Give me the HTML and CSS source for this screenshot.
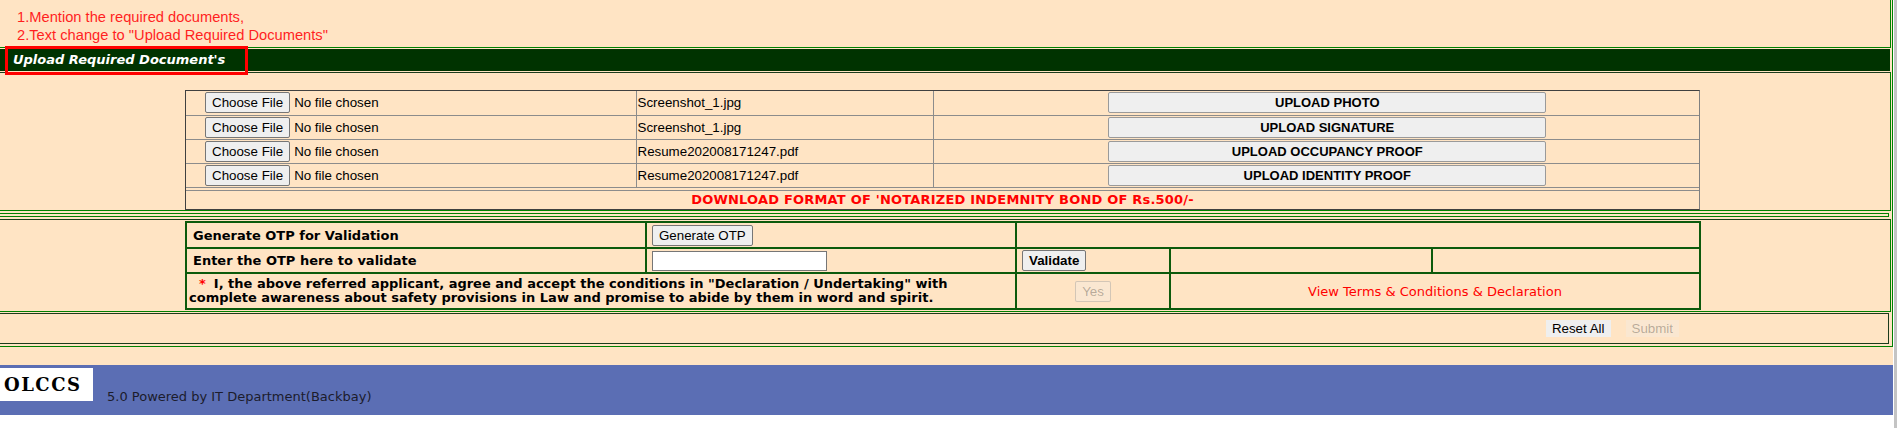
FILE: index.html
```html
<!DOCTYPE html>
<html lang="en">
<head>
<meta charset="utf-8">
<title>Upload Required Documents</title>
<link rel="stylesheet" href="styles.css">
</head>
<body>
<div class="page">
  <div class="sheet">
    <div class="frame">
      <div class="note">
        <p>1.Mention the required documents,</p>
        <p>2.Text change to "Upload Required Documents"</p>
      </div>
      <div class="band">
        <span class="band-title">Upload Required Document's</span>
        <span class="annot"></span>
      </div>
      <div class="upload">
        <div class="files-wrap">
          <table class="files">
            <colgroup><col class="fc1"><col class="fc2"><col class="fc3"></colgroup>
            <tr>
              <td class="pick"><input type="file" class="file"></td>
              <td class="fname">Screenshot_1.jpg</td>
              <td class="act"><button class="up-btn">UPLOAD PHOTO</button></td>
            </tr>
            <tr>
              <td class="pick"><input type="file" class="file"></td>
              <td class="fname">Screenshot_1.jpg</td>
              <td class="act"><button class="up-btn">UPLOAD SIGNATURE</button></td>
            </tr>
            <tr>
              <td class="pick"><input type="file" class="file"></td>
              <td class="fname">Resume202008171247.pdf</td>
              <td class="act"><button class="up-btn">UPLOAD OCCUPANCY PROOF</button></td>
            </tr>
            <tr>
              <td class="pick"><input type="file" class="file"></td>
              <td class="fname">Resume202008171247.pdf</td>
              <td class="act"><button class="up-btn">UPLOAD IDENTITY PROOF</button></td>
            </tr>
          </table>
          <div class="download">DOWNLOAD FORMAT OF 'NOTARIZED INDEMNITY BOND OF Rs.500/-</div>
        </div>
      </div>
      <div class="spacer"></div>
      <div class="otp">
        <table class="otp-table">
          <colgroup><col class="oc1"><col class="oc2"><col class="oc3"><col class="oc4"><col class="oc5"></colgroup>
          <tr class="r1">
            <td class="label">Generate OTP for Validation</td>
            <td class="ctl"><button class="btn">Generate OTP</button></td>
            <td colspan="3"></td>
          </tr>
          <tr class="r2">
            <td class="label">Enter the OTP here to validate</td>
            <td class="ctl"><input type="text" class="otp-input"></td>
            <td class="ctl"><button class="btn strong">Validate</button></td>
            <td></td>
            <td></td>
          </tr>
          <tr class="r3">
            <td colspan="2" class="decl"><span class="req">*</span>I, the above referred applicant, agree and accept the conditions in "Declaration / Undertaking" with<br>complete awareness about safety provisions in Law and promise to abide by them in word and spirit.</td>
            <td class="center"><button class="btn" disabled>Yes</button></td>
            <td colspan="2" class="center terms">View Terms &amp; Conditions &amp; Declaration</td>
          </tr>
        </table>
      </div>
      <div class="actions">
        <button class="flat-btn">Reset All</button>
        <button class="flat-btn" disabled>Submit</button>
      </div>
    </div>
  </div>
  <footer class="footer">
    <div class="logo">OLCCS</div>
    <div class="powered">5.0 Powered by IT Department(Backbay)</div>
  </footer>
</div>
<div class="scrollbar"></div>
</body>
</html>
```

FILE: styles.css
```css
* { box-sizing: border-box; }

html, body {
  margin: 0;
  padding: 0;
  background: #ffffff;
}

body {
  display: flex;
  height: 428px;
  overflow: hidden;
  font-family: "DejaVu Sans", Verdana, sans-serif;
  font-size: 13px;
  color: #000;
}

.page {
  width: 1893px;
  flex: none;
}

.scrollbar {
  width: 4px;
  flex: none;
  border-left: 1px solid #ffffff;
  background: #c4c4c4;
}

.sheet {
  background: #ffe4c4;
  height: 365px;
}

.frame {
  height: 347px;
  padding-right: 1px;
  border-right: 1px solid #008000;
  border-bottom: 1px solid #008000;
}

/* note */
.note {
  height: 48px;
  padding: 8px 0 0 17px;
  border-right: 1px solid #008000;
  border-bottom: 1px solid #008000;
  color: #ff1f1f;
  font: 14.7px/18px "Liberation Sans", Arial, sans-serif;
}
.note p { margin: 0; }

/* header band */
.band {
  position: relative;
  height: 22px;
  margin: 1px 1px 1px 0;
  padding-left: 13px;
  background: #003300;
  color: #ffffff;
  font: italic bold 13px/22px "DejaVu Sans", Verdana, sans-serif;
}
.annot {
  position: absolute;
  left: 5px;
  top: -3px;
  width: 243px;
  height: 29px;
  border: 3px solid #ff0000;
}

/* upload section */
.upload {
  height: 139px;
  padding: 17px 0 0 185px;
  border-top: 1px solid #1c3b1c;
  border-right: 1px solid #008000;
  border-bottom: 1px solid #008000;
}
.files-wrap {
  width: 1515px;
  border: 1px solid #404040;
  border-right-color: #808080;
}
table.files {
  width: 100%;
  border-collapse: collapse;
  table-layout: fixed;
  font: 13.33px/15px "Liberation Sans", Arial, sans-serif;
}
.fc1 { width: 450px; }
.fc2 { width: 297px; }
.files tr { height: 24px; }
.files td {
  padding: 0;
  border-right: 1px solid #8c8c8c;
  border-bottom: 1px solid #8c8c8c;
  vertical-align: middle;
}
.files td:last-child { border-right: 0; }
.files td.pick { padding-left: 19px; }
.files td.fname { padding-left: 1px; }
.files td.act { padding-left: 22px; text-align: center; }

.file {
  font: 13.33px/15px "Liberation Sans", Arial, sans-serif;
  color: #000;
  vertical-align: middle;
}
.file::file-selector-button {
  font: 13.33px/15px "Liberation Sans", Arial, sans-serif;
  height: 21px;
  padding: 1px 6px;
  margin-right: 4px;
  border: 1px solid #767676;
  border-radius: 2px;
  background: #efefef;
  color: #000;
}

.up-btn {
  width: 438px;
  height: 21px;
  padding: 0;
  border: 1px solid #9a9a9a;
  border-radius: 2px;
  background: #efefef;
  color: #000;
  font: bold 13px/15px "Liberation Sans", Arial, sans-serif;
  vertical-align: middle;
}

.download {
  height: 19px;
  margin-top: 2px;
  border-top: 1px solid #8c8c8c;
  text-align: center;
  color: #ff0000;
  letter-spacing: 0.2px;
  font: bold 13px/18px "DejaVu Sans", Verdana, sans-serif;
}

/* spacer */
.spacer {
  height: 4px;
  margin: 2px 2px 2px 0;
  border-top: 1px solid #008000;
  border-right: 1px solid #008000;
  border-bottom: 1px solid #008000;
}

/* otp section */
.otp {
  height: 93px;
  padding: 1px 0 0 185px;
  border-top: 1px solid #1c3b1c;
  border-right: 1px solid #008000;
  border-bottom: 1px solid #008000;
}
table.otp-table {
  width: 1515px;
  border-collapse: collapse;
  table-layout: fixed;
  font: bold 13px/15px "DejaVu Sans", Verdana, sans-serif;
}
.oc1 { width: 460px; }
.oc2 { width: 370px; }
.oc3 { width: 154px; }
.oc4 { width: 262px; }
.oc5 { width: 268px; }
.otp-table td {
  border: 2px solid #0c5a0c;
  padding: 0 5px;
  vertical-align: middle;
}
.otp-table tr.r1 { height: 26px; }
.otp-table tr.r2 { height: 25px; }
.otp-table tr.r3 { height: 36px; }
.otp-table td.label { padding-left: 6px; }
.otp-table td.decl { padding-left: 2px; line-height: 14px; }
.otp-table td.center { text-align: center; }
.otp-table td.terms {
  color: #ff0000;
  font-weight: normal;
}
.req {
  color: #ff0000;
  margin: 0 8px 0 10px;
}

.btn {
  height: 21px;
  padding: 1px 6px;
  border: 1px solid #767676;
  border-radius: 2px;
  background: #efefef;
  color: #000;
  font: 13.33px/15px "Liberation Sans", Arial, sans-serif;
  vertical-align: middle;
}
.btn.strong { font-weight: bold; }
.btn:disabled {
  color: rgba(16, 16, 16, 0.3);
  background: rgba(239, 239, 239, 0.3);
  border-color: rgba(118, 118, 118, 0.3);
}
.otp-input {
  width: 175px;
  height: 20px;
  padding: 1px 2px;
  border: 1px solid #767676;
  background: #fff;
  vertical-align: middle;
}

/* actions */
.actions {
  height: 31px;
  margin: 1px 2px 0 0;
  padding-right: 209px;
  border-top: 1px solid #1c3b1c;
  border-right: 1px solid #1c3b1c;
  border-bottom: 1px solid #1c3b1c;
  display: flex;
  align-items: center;
  justify-content: flex-end;
  gap: 15px;
}
.flat-btn {
  height: 17px;
  padding: 0 6px;
  border: 0;
  background: #efefef;
  color: #000;
  font: 13.33px/17px "Liberation Sans", Arial, sans-serif;
}
.flat-btn:disabled {
  color: rgba(16, 16, 16, 0.3);
  background: rgba(239, 239, 239, 0.3);
}

/* footer */
.footer {
  height: 50px;
  padding-top: 3px;
  background: #5b6eb4;
  display: flex;
  align-items: flex-start;
}
.logo {
  width: 93px;
  height: 33px;
  padding-left: 4px;
  background: #ffffff;
  color: #000;
  font: bold 18px/34px "DejaVu Serif", "Liberation Serif", serif;
  letter-spacing: 1.5px;
}
.powered {
  margin: 21px 0 0 14px;
  color: #1c1c2c;
  font: 13px/15px "DejaVu Sans", Verdana, sans-serif;
}
```
